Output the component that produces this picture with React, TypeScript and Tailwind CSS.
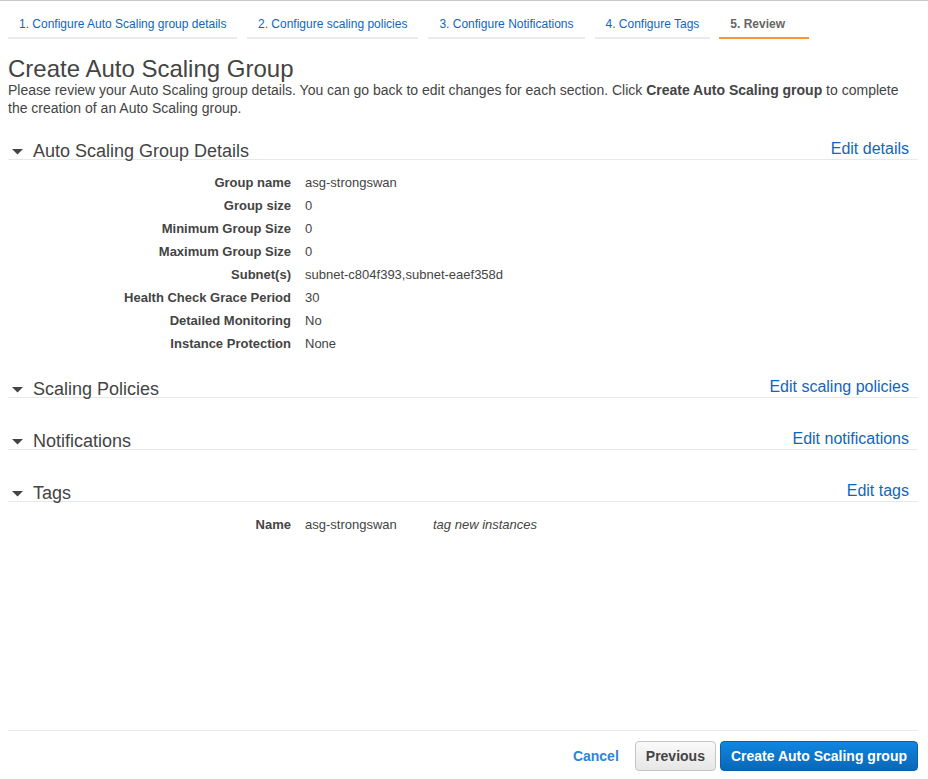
import React from "react";

const tabs = [
  { label: "1. Configure Auto Scaling group details", active: false },
  { label: "2. Configure scaling policies", active: false },
  { label: "3. Configure Notifications", active: false },
  { label: "4. Configure Tags", active: false },
  { label: "5. Review", active: true },
];

const details: [string, string][] = [
  ["Group name", "asg-strongswan"],
  ["Group size", "0"],
  ["Minimum Group Size", "0"],
  ["Maximum Group Size", "0"],
  ["Subnet(s)", "subnet-c804f393,subnet-eaef358d"],
  ["Health Check Grace Period", "30"],
  ["Detailed Monitoring", "No"],
  ["Instance Protection", "None"],
];

function SectionHeader({ title, link }: { title: string; link: string }) {
  return (
    <div className="flex items-start justify-between border-b border-[#e8e8e8]">
      <div className="flex items-center">
        <svg width="11" height="6" viewBox="0 0 11 6" className="ml-[4px] mr-[10px] mt-[1px]">
          <polygon points="0,0 11,0 5.5,5.5" fill="#444" />
        </svg>
        <h2 className="text-[18px] leading-[16px] text-[#444] font-normal">{title}</h2>
      </div>
      <a href="#" className="text-[16px] leading-[16px] text-[#1166bb] -mt-[2px] mr-[9px]">
        {link}
      </a>
    </div>
  );
}

export default function App() {
  return (
    <div
      className="min-h-screen flex flex-col bg-white border-t border-[#c8c8c8] text-[#444]"
      style={{ fontFamily: '"Liberation Sans", Arial, Helvetica, sans-serif' }}
    >
      <div className="flex-1 pl-[8px] pr-[10px]">
        <div className="flex gap-[10px] pt-[14px]">
          {tabs.map((t, i) => (
            <div
              key={t.label}
              className={
                t.active
                  ? "ml-[-1px] px-[11px] pb-[4px] border-b-2 border-[#f7982f] text-[12px] leading-[18px] font-bold text-[#666] w-[90px] whitespace-nowrap"
                  : i === 0
                  ? "px-[11px] pb-[4px] border-b-2 border-[#ebebeb] text-[12px] leading-[18px] text-[#1166bb] w-[229px] whitespace-nowrap"
                  : "px-[11px] pb-[4px] border-b-2 border-[#ebebeb] text-[12px] leading-[18px] text-[#1166bb] whitespace-nowrap"
              }
            >
              {t.label}
            </div>
          ))}
        </div>

        <h1 className="mt-[18px] text-[24px] leading-[24px] font-normal text-[#444]">
          Create Auto Scaling Group
        </h1>
        <p className="text-[14px] leading-[18px] text-[#444]">
          Please review your Auto Scaling group details. You can go back to edit changes for each section. Click{" "}
          <b>Create Auto Scaling group</b> to complete
          <br />
          the creation of an Auto Scaling group.
        </p>

        <div className="mt-[26px]">
          <SectionHeader title="Auto Scaling Group Details" link="Edit details" />
          <div className="pt-[11px] pb-[11px]">
            {details.map(([k, v]) => (
              <div key={k} className="flex text-[13px] leading-[23px]">
                <div className="w-[283px] text-right font-bold text-[#444]">{k}</div>
                <div className="pl-[14px] text-[#444]">{v}</div>
              </div>
            ))}
          </div>
        </div>

        <div className="mt-[15px]">
          <SectionHeader title="Scaling Policies" link="Edit scaling policies" />
          <div className="h-[20px]" />
        </div>

        <div className="mt-[15px]">
          <SectionHeader title="Notifications" link="Edit notifications" />
          <div className="h-[20px]" />
        </div>

        <div className="mt-[15px]">
          <SectionHeader title="Tags" link="Edit tags" />
          <div className="pt-[11px]">
            <div className="flex text-[13px] leading-[23px]">
              <div className="w-[283px] text-right font-bold text-[#444]">Name</div>
              <div className="pl-[14px] w-[142px] text-[#444]">asg-strongswan</div>
              <div className="italic text-[#444]">tag new instances</div>
            </div>
          </div>
        </div>
      </div>

      <div className="ml-[8px] mr-[10px] border-t border-[#e8e8e8] pt-[10px] pb-[8px] flex justify-end items-center">
        <a href="#" className="text-[14px] font-bold text-[#2b86d8] mr-[16px]">
          Cancel
        </a>
        <button className="h-[30px] px-[10px] rounded-[4px] border border-[#c6c6c6] bg-gradient-to-b from-[#fafafa] to-[#e6e6e6] text-[14px] font-bold text-[#444] mr-[4px]">
          Previous
        </button>
        <button className="h-[30px] px-[10px] rounded-[4px] border border-[#0b5fa8] bg-gradient-to-b from-[#1086e0] to-[#0a67b8] text-[14px] font-bold text-white">
          Create Auto Scaling group
        </button>
      </div>
    </div>
  );
}
